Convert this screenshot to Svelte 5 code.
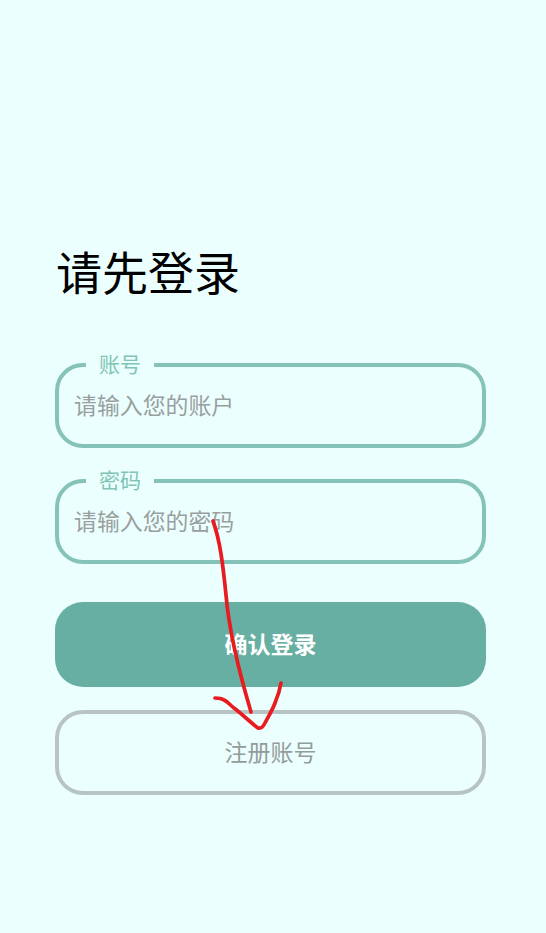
<script lang="ts">
	const fields = [
		{ label: '账号', placeholder: '请输入您的账户', type: 'text' },
		{ label: '密码', placeholder: '请输入您的密码', type: 'password' }
	];
</script>

<div class="page">
	<main class="login">
		<h1 class="title">请先登录</h1>

		{#each fields as field}
			<fieldset class="field">
				<legend>{field.label}</legend>
				<input type={field.type} placeholder={field.placeholder} />
			</fieldset>
		{/each}

		<button class="btn primary">确认登录</button>
		<button class="btn outline">注册账号</button>
	</main>

	<!-- hand drawn annotation on top of the screenshot -->
	<svg class="scribble" viewBox="0 0 546 933" fill="none" stroke="#e81c20" stroke-width="3.7" stroke-linecap="round" stroke-linejoin="round">
		<path d="M213 521C220 540 223 565 226 595C229 630 237 665 251 712" />
		<path d="M215 698C219 698 221 698 224 700C228 702 230 705 234 708C242 714 250 722 258 728C261 729 263 727 265 723C268 717 272 711 275 703C278 696 280 689 281 683" />
	</svg>
</div>

<style>
	:global(body) {
		margin: 0;
		background: #ebfffe;
	}

	.page {
		position: relative;
		height: 933px;
		overflow: hidden;
		font-family: "Noto Sans CJK SC", "Noto Sans", sans-serif;
	}

	.login {
		display: flex;
		flex-direction: column;
		padding: 237px 60px 0 55px;
	}

	.title {
		margin: 0 0 45px 1px;
		font-size: 46px;
		font-weight: 400;
		line-height: 66px;
		color: #000;
	}

	.field {
		margin: 0 0 16px;
		padding: 0 15px;
		height: 100px;
		box-sizing: border-box;
		border: 4px solid #85c2b7;
		border-radius: 28px;
		min-width: 0;
	}

	legend {
		margin-left: 12px;
		padding: 0 13px 4px;
		font-size: 21px;
		line-height: 30px;
		color: #7fc4b4;
	}

	input {
		display: block;
		width: 100%;
		height: 43px;
		padding: 0;
		border: none;
		outline: none;
		background: transparent;
		font-family: inherit;
		font-size: 22.9px;
		color: #333;
	}

	input::placeholder {
		color: #999f9e;
		opacity: 1;
	}

	.btn {
		display: block;
		width: 100%;
		height: 85px;
		padding: 0 0 4px;
		box-sizing: border-box;
		border-radius: 28px;
		font-family: inherit;
		font-size: 23px;
	}

	.primary {
		margin-top: 22px;
		border: none;
		background: #68afa3;
		color: #fff;
		font-weight: 700;
	}

	.outline {
		margin-top: 23px;
		border: 4px solid #b8c4c3;
		background: transparent;
		color: #939c9b;
	}

	.scribble {
		position: absolute;
		inset: 0;
		width: 546px;
		height: 933px;
		pointer-events: none;
	}
</style>
